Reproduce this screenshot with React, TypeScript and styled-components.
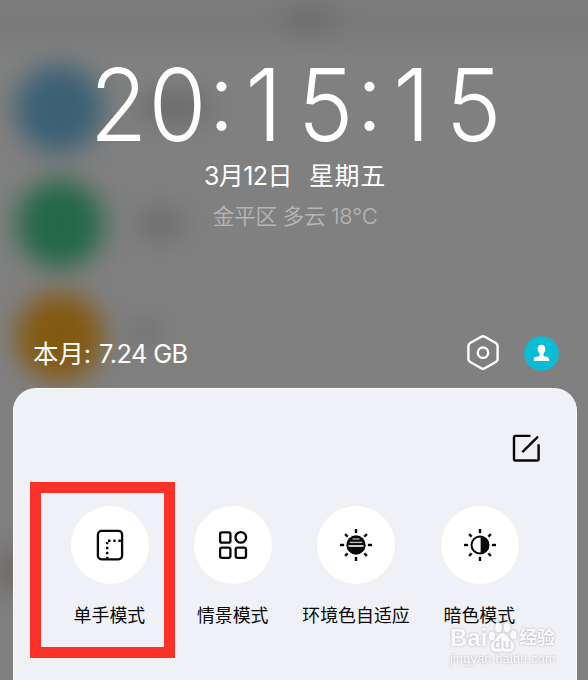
import React from "react";
import styled, { createGlobalStyle } from "styled-components";

const GlobalStyle = createGlobalStyle`
  * { box-sizing: border-box; }
  body { margin: 0; overflow: hidden; }
`;

const Screen = styled.div`
  position: relative;
  display: flex;
  flex-direction: column;
  width: 588px;
  height: 680px;
  overflow: hidden;
  background: linear-gradient(#7c7c7c, #797979 22px, #808080 60px, #808080);
  font-family: Inter, "Noto Sans CJK SC", sans-serif;
  color: #fff;
`;

const Blob = styled.div<{ $x: number; $y: number; $w: number; $h: number; $color: string; $blur?: number }>`
  position: absolute;
  left: ${(p) => p.$x - p.$w / 2}px;
  top: ${(p) => p.$y - p.$h / 2}px;
  width: ${(p) => p.$w}px;
  height: ${(p) => p.$h}px;
  border-radius: 50%;
  background: ${(p) => p.$color};
  filter: blur(${(p) => p.$blur ?? 13}px);
`;

const Header = styled.header`
  position: relative;
  display: flex;
  flex-direction: column;
  align-items: center;
  height: 318px;
  padding-top: 54px;
`;

const Clock = styled.div`
  display: flex;
  height: 100px;
  margin-left: 3px;
  font-size: 101px;
  line-height: 100px;
  font-weight: 320;
`;

const Digit = styled.span<{ $shift?: number }>`
  display: flex;
  justify-content: center;
  width: 59px;
  padding-right: ${(p) => p.$shift ?? 0}px;
  transform: scaleX(0.93);
`;

const Colon = styled.span`
  width: 30px;
  height: 84px;
  font-size: 94px;
  line-height: 84px;
  text-align: center;
`;

const DateLine = styled.div`
  display: flex;
  gap: 17px;
  margin-top: 4px;
  margin-left: 2px;
  height: 36px;
  font-size: 25px;
  line-height: 36px;
`;

const DateText = styled.span<{ $spacing: number }>`
  letter-spacing: ${(p) => p.$spacing}px;
`;

const Weather = styled.div`
  margin-top: 5px;
  margin-left: 2px;
  height: 34px;
  font-size: 21.8px;
  line-height: 34px;
  font-weight: 350;
  letter-spacing: -0.4px;
  color: #b6b6b6;
`;

const StatusRow = styled.div`
  position: relative;
  display: flex;
  align-items: center;
  height: 70px;
  padding: 0 29px 0 33px;
`;

const Usage = styled.div`
  display: flex;
  align-items: baseline;
  flex: 1;
  gap: 8px;
  padding-bottom: 2px;
  font-size: 25.4px;
`;

const UsageValue = styled.span`
  font-weight: 380;
  letter-spacing: -0.6px;
`;

const HexIcon = styled.svg`
  width: 36px;
  height: 38px;
  margin-right: 23px;
`;

const Avatar = styled.svg`
  width: 35px;
  height: 35px;
`;

const Panel = styled.main`
  position: relative;
  flex: 1;
  width: 564px;
  margin-left: 13px;
  border: 1px solid #fafbfc;
  border-bottom: 0;
  border-radius: 23px 23px 0 0;
  background: #f0f1f6;
  color: #080808;
`;

const EditRow = styled.div`
  display: flex;
  justify-content: flex-end;
  height: 117px;
  padding: 44px 35px 0 0;
`;

const EditIcon = styled.svg`
  width: 30px;
  height: 30px;
`;

const Tiles = styled.div`
  display: grid;
  grid-template-columns: repeat(4, 123.3px);
  padding-left: 34px;
`;

const Tile = styled.div`
  display: flex;
  flex-direction: column;
  align-items: center;
`;

const TileDisc = styled.div`
  display: flex;
  align-items: center;
  justify-content: center;
  width: 78px;
  height: 78px;
  border-radius: 50%;
  background: #fff;
`;

const TileIcon = styled.svg`
  width: 40px;
  height: 40px;
`;

const TileLabel = styled.div`
  margin-top: 18px;
  margin-left: -0.5px;
  font-size: 17.9px;
  line-height: 28px;
  white-space: nowrap;
`;

const Highlight = styled.div`
  position: absolute;
  left: 30px;
  top: 482px;
  width: 145px;
  height: 176px;
  border: 11px solid #fc3128;
`;

const Watermark = styled.div`
  position: absolute;
  left: 450px;
  top: 620px;
  width: 106px;
  color: #fbfbfc;
  filter: drop-shadow(0 0 0.8px #a9abb0);
`;

const Brand = styled.div`
  display: flex;
  align-items: center;
  height: 36px;
  font: 700 24px/36px "Liberation Sans", "Noto Sans CJK SC", sans-serif;
`;

const Paw = styled.svg`
  width: 31px;
  height: 36px;
  flex: none;
`;

const BrandCn = styled.span`
  font-size: 18px;
  letter-spacing: -0.3px;
  margin-left: 1px;
`;

const Site = styled.div`
  margin-top: -4px;
  font: 12.6px/14px "Liberation Sans", sans-serif;
  letter-spacing: 0.25px;
  white-space: nowrap;
`;

const Rays = () => (
  <g stroke="#080808" strokeWidth="2.4">
    {[0, 45, 90, 135, 180, 225, 270, 315].map((angle) => (
      <path key={angle} d={angle % 90 ? "M20 4.6v3.6" : "M20 4v4.1"} transform={`rotate(${angle} 20 20)`} />
    ))}
  </g>
);

const OneHandIcon = () => (
  <TileIcon viewBox="0 0 40 40" fill="none" stroke="#080808">
    <rect x="7.9" y="5.9" width="24.2" height="28.4" rx="3.6" strokeWidth="2.3" />
    <g fill="#080808" stroke="none">
      <rect x="16" y="17" width="2.4" height="2.2" rx=".5" />
      <rect x="18" y="14.6" width="2.6" height="2.3" rx=".5" />
      <rect x="23.3" y="14.6" width="2.3" height="2.3" rx=".5" />
      <rect x="28.3" y="14.6" width="2.6" height="2.3" rx=".5" />
      <rect x="16" y="21.8" width="2.4" height="2.4" rx=".5" />
      <rect x="16" y="26.8" width="2.4" height="2.4" rx=".5" />
      <rect x="16" y="31.8" width="2.4" height="2" rx=".5" />
    </g>
  </TileIcon>
);

const ScenesIcon = () => (
  <TileIcon viewBox="0 0 40 40" fill="none" stroke="#080808" strokeWidth="2.3">
    <rect x="7.1" y="7.4" width="10.3" height="10.3" rx="1.8" />
    <circle cx="27.8" cy="12.4" r="5.3" />
    <rect x="7.1" y="22.6" width="10.3" height="10.3" rx="1.8" />
    <rect x="22.7" y="22.6" width="10.3" height="10.3" rx="1.8" />
  </TileIcon>
);

const AmbientIcon = () => (
  <TileIcon viewBox="0 0 40 40">
    <Rays />
    <circle cx="20" cy="20" r="9.7" fill="#080808" />
    <path d="M16.5 14h7" stroke="#aaa" strokeWidth="1.4" />
    <path d="M13.6 17.4h12.8" stroke="#bbb" strokeWidth="1.4" />
    <path d="M12.5 21h15" stroke="#fff" strokeWidth="1.6" />
  </TileIcon>
);

const DarkIcon = () => (
  <TileIcon viewBox="0 0 40 40">
    <Rays />
    <circle cx="20" cy="20" r="8.5" fill="#fff" stroke="#080808" strokeWidth="2" />
    <path d="M20.6 11.4a8.6 8.6 0 0 1 0 17.2z" fill="#080808" />
  </TileIcon>
);

const tiles = [
  { label: "单手模式", Icon: OneHandIcon },
  { label: "情景模式", Icon: ScenesIcon },
  { label: "环境色自适应", Icon: AmbientIcon },
  { label: "暗色模式", Icon: DarkIcon },
];

export default function App() {
  return (
    <>
      <GlobalStyle />
      <Screen>
        <Blob $x={310} $y={19} $w={50} $h={20} $color="#686868" />
        <Blob $x={59} $y={109} $w={88} $h={88} $color="#3b6074" />
        <Blob $x={175} $y={107} $w={76} $h={28} $color="#686868" />
        <Blob $x={60} $y={224} $w={88} $h={88} $color="#246847" />
        <Blob $x={161} $y={224} $w={50} $h={28} $color="#6a6a6a" />
        <Blob $x={60} $y={337} $w={88} $h={88} $color="#835911" />
        <Blob $x={145} $y={332} $w={30} $h={22} $color="#6a6a6a" />
        <Blob $x={11} $y={570} $w={20} $h={50} $color="#665d58" />
        <Header>
          <Clock>
            <Digit>2</Digit>
            <Digit>0</Digit>
            <Colon>:</Colon>
            <Digit $shift={6}>1</Digit>
            <Digit>5</Digit>
            <Colon>:</Colon>
            <Digit $shift={6}>1</Digit>
            <Digit>5</Digit>
          </Clock>
          <DateLine>
            <DateText $spacing={-0.6}>3月12日</DateText>
            <DateText $spacing={0.7}>星期五</DateText>
          </DateLine>
          <Weather>金平区 多云 18℃</Weather>
        </Header>
        <StatusRow>
          <Usage>
            <span>本月:</span>
            <UsageValue>7.24 GB</UsageValue>
          </Usage>
          <HexIcon viewBox="0 0 36 38" fill="none" stroke="#fff" strokeWidth="2.4">
            <path d="M16.2 2.7q1.8-1 3.6 0l11 6.3q1.8 1 1.8 3v13q0 2-1.8 3l-11 6.3q-1.8 1-3.6 0l-11-6.3q-1.8-1-1.8-3v-13q0-2 1.8-3z" />
            <circle cx="18" cy="18.7" r="5.2" />
          </HexIcon>
          <Avatar viewBox="0 0 35 35">
            <circle cx="17.5" cy="17.5" r="17.3" fill="#0abdd7" />
            <path d="M17.5 8.8c2.5 0 3.9 1.7 3.9 4.2 0 2-.8 3.4-2 4.4v1.8c0 .9.8 1.2 2.300 1.400 2.500.4 3.500 1.100 3.500 4.300H9.800c0-3.200 1-3.900 3.500-4.300 1.500-.2 2.300-.5 2.300-1.400v-1.800c-1.200-1-2-2.400-2-4.400 0-2.500 1.400-4.200 3.900-4.200z" fill="#fff" />
          </Avatar>
        </StatusRow>
        <Panel>
          <EditRow>
            <EditIcon viewBox="0 0 30 30" fill="none" stroke="#080808" strokeWidth="2.4">
              <path d="M19.5 2.9H4.5q-1.5 0-1.5 1.5v21.6q0 1.5 1.5 1.5h21.6q1.5 0 1.5-1.5V11.2" />
              <path d="M11.3 19.2 27 3.7" />
            </EditIcon>
          </EditRow>
          <Tiles>
            {tiles.map(({ label, Icon }) => (
              <Tile key={label}>
                <TileDisc>
                  <Icon />
                </TileDisc>
                <TileLabel>{label}</TileLabel>
              </Tile>
            ))}
          </Tiles>
        </Panel>
        <Highlight />
        <Watermark>
          <Brand>
            <span>Bai</span>
            <Paw viewBox="0 0 31 36">
              <g fill="#fbfbfc">
                <ellipse cx="5" cy="16" rx="3.3" ry="4.5" />
                <ellipse cx="11.5" cy="7.5" rx="3.5" ry="5" />
                <ellipse cx="20" cy="7.5" rx="3.5" ry="5" />
                <ellipse cx="26.5" cy="15" rx="3.3" ry="4.5" />
                <path d="M15.5 13c4 0 5.500 5 9 8 4.500 4 3 11-3 11-3 0-3-.5-6-.5s-3 .5-6 .5c-6 0-7.500-7-3-11 3.500-3 5-8 9-8z" />
              </g>
              <text x="15.5" y="29" textAnchor="middle" fontFamily="Liberation Sans" fontWeight="700" fontSize="15" fill="#d8d9dd">du</text>
            </Paw>
            <BrandCn>经验</BrandCn>
          </Brand>
          <Site>jingyan.baidu.com</Site>
        </Watermark>
      </Screen>
    </>
  );
}
